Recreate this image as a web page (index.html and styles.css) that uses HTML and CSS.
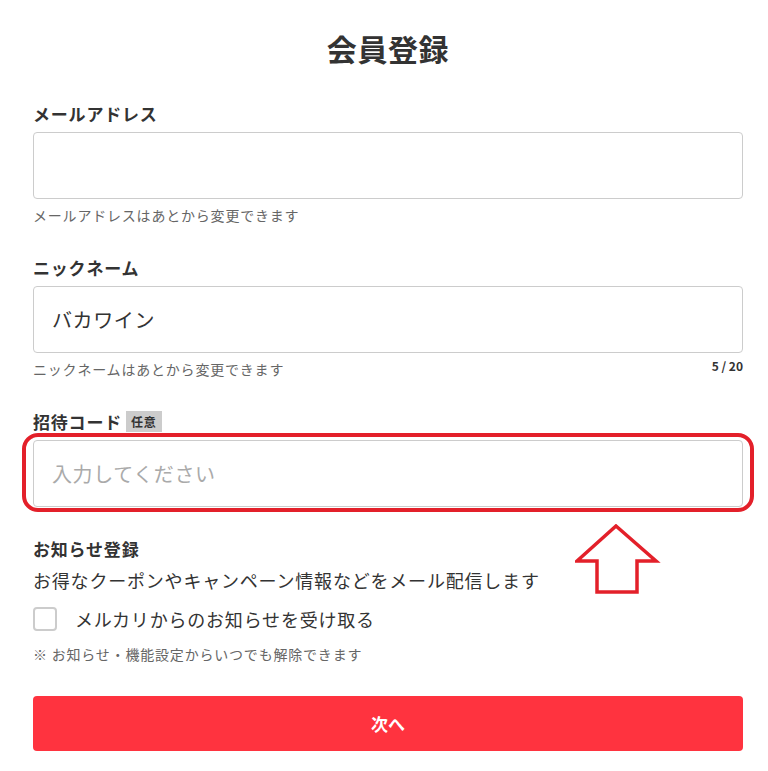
FILE: index.html
```html
<!DOCTYPE html>
<html lang="ja">
<head>
  <meta charset="UTF-8" />
  <meta name="viewport" content="width=device-width, initial-scale=1.0" />
  <title>会員登録</title>
  <link rel="stylesheet" href="styles.css">
</head>
<body>
  <div class="page">
    <h1>会員登録</h1>

    <div class="field">
      <label for="email">メールアドレス</label>
      <input type="email" id="email" />
      <div class="hint">メールアドレスはあとから変更できます</div>
    </div>

    <div class="field">
      <label for="nickname">ニックネーム</label>
      <input type="text" id="nickname" value="バカワイン" />
      <div class="hint">
        <span>ニックネームはあとから変更できます</span>
        <span class="counter">5 / 20</span>
      </div>
    </div>

    <div class="field">
      <label for="invite">招待コード<span class="badge">任意</span></label>
      <div class="marked">
        <input type="text" id="invite" placeholder="入力してください" />
      </div>
    </div>

    <div class="notice">
      <div class="notice-title">お知らせ登録</div>
      <p class="notice-text">お得なクーポンやキャンペーン情報などをメール配信します</p>
      <label class="check-row">
        <span class="checkbox"></span>
        メルカリからのお知らせを受け取る
      </label>
      <div class="hint">※ お知らせ・機能設定からいつでも解除できます</div>
    </div>

    <button type="button" class="next">次へ</button>

    <svg class="arrow" width="90" height="80" viewBox="0 0 90 80">
      <polygon points="41,2 81,37 62,37 62,68 22,68 22,37 2,37" fill="none" stroke="#e3202a" stroke-width="3.5" stroke-linejoin="miter" />
    </svg>
  </div>
</body>
</html>
```

FILE: styles.css
```css
body {
  margin: 0;
  background: #fff;
  color: #333;
  font-family: "Noto Sans CJK JP", "Noto Sans", sans-serif;
  letter-spacing: 0.05em;
}
.page {
  position: relative;
  padding: 28px 25px 20px 33px;
}
h1 {
  margin: 0 0 33px;
  font-size: 30px;
  line-height: 40px;
  text-align: center;
  font-weight: bold;
  letter-spacing: 0.02em;
}
.field {
  margin-bottom: 30px;
}
.field label {
  display: flex;
  align-items: center;
  height: 24px;
  margin-bottom: 7px;
  font-size: 17px;
  font-weight: bold;
}
.badge {
  margin-left: 4px;
  padding: 0 5px;
  height: 21px;
  line-height: 21px;
  background: #ccc;
  font-size: 12px;
  font-weight: bold;
  color: #333;
}
input {
  display: block;
  box-sizing: border-box;
  width: 100%;
  height: 67px;
  padding: 0 18px;
  border: 1px solid #ccc;
  border-radius: 4px;
  font-family: inherit;
  font-size: 20px;
  letter-spacing: 0.03em;
  color: #333;
  outline: none;
}
input::placeholder {
  color: #aaa;
}
.hint {
  display: flex;
  justify-content: space-between;
  align-items: center;
  margin-top: 6px;
  line-height: 20px;
  font-size: 14px;
  color: #666;
}
.counter {
  font-size: 12px;
  font-weight: bold;
  color: #333;
  letter-spacing: 0;
  margin-top: -6px;
}
.marked {
  position: relative;
}
.marked::after {
  content: "";
  position: absolute;
  top: -7px;
  left: -11px;
  right: -11px;
  bottom: -5px;
  border: 4px solid #e3202a;
  border-radius: 16px;
}
.notice {
  margin-top: 1px;
}
.notice-title {
  font-size: 17px;
  font-weight: bold;
  line-height: 24px;
}
.notice-text {
  margin: 6px 0 0;
  font-size: 18px;
  line-height: 26px;
}
.check-row {
  display: flex;
  align-items: center;
  gap: 18px;
  margin-top: 10px;
  height: 32px;
  font-size: 18px;
}
.checkbox {
  box-sizing: border-box;
  width: 24px;
  height: 24px;
  border: 2px solid #ccc;
  border-radius: 4px;
}
.notice .hint {
  margin-top: 9px;
}
.next {
  display: block;
  width: 100%;
  height: 55px;
  margin-top: 32px;
  border: none;
  border-radius: 4px;
  background: #ff333f;
  color: #fff;
  font-family: inherit;
  font-size: 17px;
  font-weight: bold;
  cursor: pointer;
}
.arrow {
  position: absolute;
  left: 575px;
  top: 524px;
}
```
